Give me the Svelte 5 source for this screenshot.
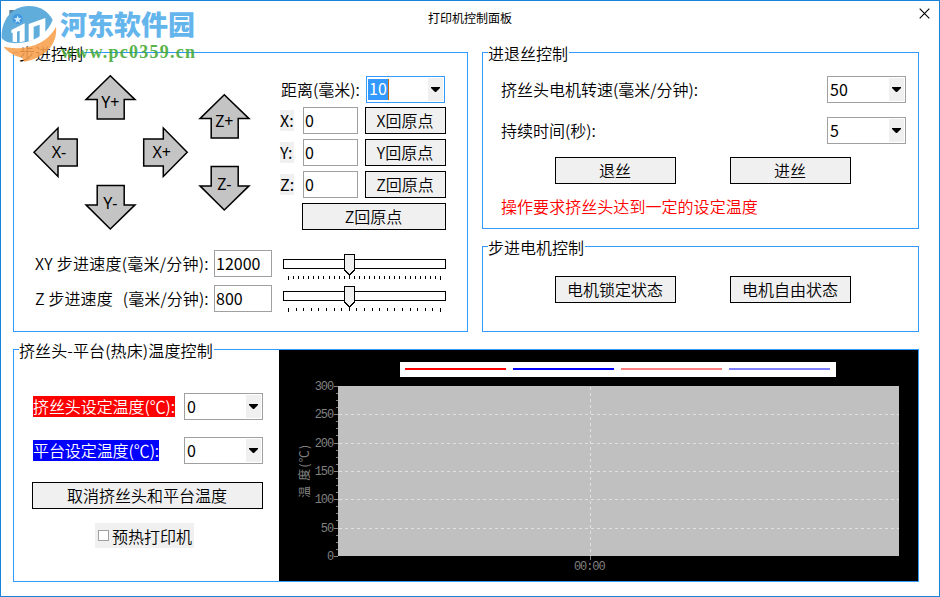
<script lang="ts">
  // Printer control panel: jogging, filament feed, motor state and temperatures.

  const UP = 'M90.3 10.7 115 34.6H104.2V54H77.2V34.6H66Z';
  const DOWN = 'M90.3 164 115 139.9H104.2V120.5H77.2V139.9H66Z';

  const arrows = [
    { label: 'Y+', d: UP, dx: 0, dy: 0, x: 90.3, y: 42.8 },
    { label: 'Z+', d: UP, dx: 114, dy: 19, x: 204.3, y: 61.9 },
    { label: 'X-', d: 'M14 87.3 38 63V74H57.2V101H38V111.5Z', dx: 0, dy: 0, x: 39, y: 92.8 },
    { label: 'X+', d: 'M167.2 87.3 143.3 63V74H123.7V101H143.3V111.5Z', dx: 0, dy: 0, x: 141.7, y: 92.8 },
    { label: 'Y-', d: DOWN, dx: 0, dy: 0, x: 90.3, y: 143.8 },
    { label: 'Z-', d: DOWN, dx: 114, dy: -19, x: 204.3, y: 124.9 },
  ];

  const axes = ['X', 'Y', 'Z'];
  let position = $state<Record<string, string>>({ X: '0', Y: '0', Z: '0' });
  let speedXY = $state('12000');
  let speedZ = $state('800');
  let preheat = $state(false);

  const sliders = [
    { y: 5, steps: 30 },
    { y: 37, steps: 20 },
  ];

  const series = ['#ff0000', '#0000ff', '#ff8080', '#8080ff'];
  const scale = [
    { value: 300, y: 36 },
    { value: 250, y: 64 },
    { value: 200, y: 93 },
    { value: 150, y: 121 },
    { value: 100, y: 149 },
    { value: 50, y: 178 },
    { value: 0, y: 206 },
  ];
</script>

{#snippet combo(value: string, active = false)}
  <div class="combo" class:active role="combobox" aria-expanded="false" aria-controls="list" tabindex="0">
    <span class="value">{value}</span>
    <span class="drop"><svg width="9" height="5" viewBox="0 0 9 5"><path d="M0 0H9V1L5 5H4L0 1Z" /></svg></span>
  </div>
{/snippet}

<div class="window">
  <header>
    <h1>打印机控制面板</h1>
    <button class="close" aria-label="close">
      <svg width="11" height="11" viewBox="0 0 11 11"><path d="M.7.7 10.3 10.3M10.3.7.7 10.3" /></svg>
    </button>
  </header>

  <main>
    <section class="group motion">
      <h2>步进控制</h2>
      <div class="top">
        <svg class="jog" width="240" height="175" viewBox="0 0 240 175">
          {#each arrows as a}
            <path d={a.d} transform="translate({a.dx} {a.dy})" />
            <text x={a.x} y={a.y}>{a.label}</text>
          {/each}
        </svg>
        <div class="axes">
          <div class="row first">
            <span class="text">距离(毫米):</span>
            {@render combo('10', true)}
          </div>
          {#each axes as axis}
            <div class="row">
              <span class="tag">{axis}:</span>
              <input class="pos" bind:value={position[axis]} />
              <button class="btn home">{axis}回原点</button>
            </div>
          {/each}
          <button class="btn home-z">Z回原点</button>
        </div>
      </div>
      <div class="speeds">
        <div class="fields">
          <label><span class="xy">XY 步进速度(毫米/分钟):</span><input bind:value={speedXY} /></label>
          <label><span class="z">Z 步进速度<i></i>(毫米/分钟):</span><input bind:value={speedZ} /></label>
        </div>
        <svg class="sliders" width="163" height="60" viewBox="0 0 163 60" shape-rendering="crispEdges">
          {#each sliders as s}
            <rect class="track" x=".5" y={s.y + 0.5} width="162" height="9" />
            <path class="thumb" d="M61.5 {s.y - 4.5}H71.5V{s.y + 11}L66.5 {s.y + 16}L61.5 {s.y + 11}Z" />
            {#each Array(s.steps + 1) as _, i}
              <rect
                x={Math.round(5 + (i * 152) / s.steps)}
                y={s.y + 17}
                width="1"
                height={i === 0 || i === s.steps ? 4 : 3}
              />
            {/each}
          {/each}
        </svg>
      </div>
    </section>

    <section class="group feed">
      <h2>进退丝控制</h2>
      <div class="row r1"><span class="text">挤丝头电机转速(毫米/分钟):</span>{@render combo('50')}</div>
      <div class="row r2"><span class="text">持续时间(秒):</span>{@render combo('5')}</div>
      <div class="pair">
        <button class="btn">退丝</button>
        <button class="btn">进丝</button>
      </div>
      <p class="warn">操作要求挤丝头达到一定的设定温度</p>
    </section>

    <section class="group motors">
      <h2>步进电机控制</h2>
      <div class="pair">
        <button class="btn">电机锁定状态</button>
        <button class="btn">电机自由状态</button>
      </div>
    </section>

    <section class="group temps">
      <div class="left">
        <h2 class="wide">挤丝头-平台(热床)温度控制</h2>
        <div class="row t1"><span class="hot">挤丝头设定温度(℃):</span>{@render combo('0')}</div>
        <div class="row t2"><span class="bed">平台设定温度(℃):</span>{@render combo('0')}</div>
        <button class="btn cancel">取消挤丝头和平台温度</button>
        <label class="preheat"><input type="checkbox" bind:checked={preheat} />预热打印机</label>
      </div>
      <svg class="chart" width="639" height="231" viewBox="0 0 639 231" shape-rendering="crispEdges">
        <rect width="639" height="231" fill="#000" />
        <rect x="121" y="12" width="436" height="15" fill="#fff" />
        {#each series as color, i}
          <rect x={126 + i * 108} y="18" width="101" height="2" fill={color} />
        {/each}
        <rect x="59" y="36" width="561" height="170" fill="#c0c0c0" />
        {#each scale as tick, i}
          <text x="54" y={tick.y + 4} text-anchor="end">{tick.value}</text>
          <rect class="tick" x="55" y={tick.y} width="4" height="1" />
          {#if i < scale.length - 1}
            {#each [7, 14, 21] as step}
              <rect class="tick" x="57" y={tick.y + step} width="2" height="1" />
            {/each}
          {/if}
          {#if i > 0 && i < scale.length - 1}
            <path class="grid" d="M60 {tick.y + 0.5}H620" />
          {/if}
        {/each}
        <path class="grid" d="M311.5 37V206" />
        <rect class="tick" x="311" y="206" width="1" height="4" />
        <text x="295" y="220">00:00</text>
        <text class="axis" transform="translate(29.5 148) rotate(-90)" textLength="53">温 度(℃)</text>
      </svg>
    </section>
  </main>

  <div class="badge">
    <svg width="60" height="66" viewBox="0 0 180 198">
      <path d="M28 30H56L70 38V72H28Z" fill="#42738f" />
      <path
        d="M5 114C2 66 32 18 86 18 122 18 146 36 158 60 146 94 112 120 74 127 46 132 16 130 5 114Z"
        fill="#4ba2d8"
      />
      <path d="M34 90 74 70V124L59 127V92L51 95V127L38 125V98L34 99ZM86 72 136 54V104L119 114V74L101 80V121L86 124Z" fill="#fff" />
      <path d="M168 80C174 134 134 174 72 185L66 172C46 170 22 156 11 140 50 150 132 148 168 80Z" fill="#f9a04d" />
      <circle cx="53" cy="57" r="15" fill="#2689dc" />
      <path d="m53 46 3 8 9 1-7 5 2 9-7-5-7 5 2-9-7-5 9-1Z" fill="#c9e8fa" />
    </svg>
    <div class="words">
      <b>河东软件园</b>
      <em>www.pc0359.cn</em>
    </div>
  </div>
</div>

<style>
  :global(body) {
    margin: 0;
    background: #fff;
  }

  .window {
    position: relative;
    box-sizing: border-box;
    width: 940px;
    height: 597px;
    border: 1px solid #1883d7;
    background: #fff;
    color: #000;
    font: 16px/20px 'Noto Sans CJK SC', sans-serif;
    font-weight: 350;
    white-space: nowrap;
    overflow: hidden;
  }

  .window * {
    box-sizing: border-box;
  }

  header {
    display: grid;
    grid-template-columns: 1fr auto 1fr;
    height: 51px;
  }

  h1 {
    grid-column: 2;
    margin: 7px 0 0;
    font-size: 12px;
    font-weight: 400;
  }

  .close {
    justify-self: end;
    align-self: start;
    height: 11px;
    margin: 7px 9px 0 0;
    padding: 0;
    border: 0;
    background: none;
    display: flex;
  }

  .close path {
    stroke: #000;
    stroke-width: 1.1;
  }

  main {
    display: grid;
    grid-template-columns: 455px 437px;
    grid-template-rows: 177px 86px 233px;
    gap: 17px 14px;
    margin-left: 12px;
  }

  .group {
    border: 1px solid #3399ff;
  }

  h2 {
    width: fit-content;
    height: 21px;
    margin: -10px 0 0 5px;
    padding: 0 1px 0 0;
    background: #fff;
    font-size: 16px;
    font-weight: inherit;
  }

  .wide {
    letter-spacing: 0.12px;
  }

  .row {
    display: flex;
    align-items: center;
    justify-content: space-between;
    height: 27px;
  }

  .text {
    padding-bottom: 2px;
  }

  .btn {
    height: 27px;
    padding: 0 1px 2px 0;
    border: 1px solid #000;
    background: #f0f0f0;
    color: #000;
    font: inherit;
  }

  input {
    height: 27px;
    padding: 0 0 2px 1px;
    border: 1px solid #a0a0a0;
    background: #fff;
    font: inherit;
    font-weight: 400;
    color: #000;
  }

  .combo {
    display: flex;
    align-items: center;
    justify-content: space-between;
    width: 79px;
    height: 27px;
    padding: 1px;
    border: 1px solid #a0a0a0;
    font-weight: 400;
  }

  .value {
    padding: 0 1px 2px;
  }

  .active {
    border-color: #3399ff;
  }

  .active .value {
    background: #3399ff;
    border-right: 1px solid #c60;
    color: #fff;
    height: 21px;
    line-height: 19px;
  }

  .drop {
    display: flex;
    align-items: center;
    justify-content: center;
    width: 15px;
    height: 23px;
    background: #f0f0f0;
  }

  .motion {
    grid-row: span 2;
  }

  .top {
    display: flex;
    padding: 0 0 0 6px;
    gap: 20px;
  }

  .motion .top {
    margin-top: 1px;
  }

  .jog path {
    fill: #c4c4c4;
    stroke: #000;
    stroke-width: 1.5;
  }

  .jog text {
    font: 16px 'Noto Sans', sans-serif;
    text-anchor: middle;
  }

  .axes {
    display: flex;
    flex-direction: column;
    gap: 5px;
    width: 166px;
    padding-top: 11px;
  }

  .first {
    margin-bottom: -1px;
    padding: 0 1px;
  }

  .tag {
    width: 14px;
    height: 21px;
    background: #f0f0f0;
    font-weight: 400;
  }

  .pos {
    width: 55px;
    margin-left: 2px;
  }

  .home {
    width: 81px;
  }

  .home-z {
    align-self: flex-end;
    width: 144px;
  }

  .speeds {
    display: flex;
    gap: 11px;
    padding: 10px 0 0 21px;
  }

  .fields {
    display: flex;
    flex-direction: column;
    gap: 8px;
  }

  .fields label {
    display: flex;
    align-items: center;
  }

  .fields span {
    width: 179px;
    padding-bottom: 2px;
  }

  .xy {
    letter-spacing: 0.25px;
  }

  .z {
    letter-spacing: 0.1px;
  }

  .fields i {
    display: inline-block;
    width: 10px;
  }

  .fields input {
    width: 58px;
  }

  .sliders {
    margin-top: 4px;
  }

  .track {
    fill: #fff;
    stroke: #000;
  }

  .thumb {
    fill: #f0f0f0;
    stroke: #000;
  }

  .feed .row {
    padding: 0 12px 0 18px;
  }

  .r1 {
    margin-top: 12px;
  }

  .r2 {
    margin-top: 14px;
  }

  .pair {
    display: flex;
    gap: 54px;
    margin: 13px 0 0 72px;
  }

  .pair .btn {
    width: 121px;
  }

  .warn {
    margin: 12px 0 0 18px;
    letter-spacing: 0.05px;
    color: #f00;
  }

  .motors .pair {
    margin-top: 18px;
  }

  .temps {
    grid-column: span 2;
    display: flex;
  }

  .left {
    width: 265px;
  }

  .left .row {
    padding: 0 16px 0 19px;
  }

  .t1 {
    margin-top: 32px;
  }

  .t2 {
    margin-top: 17px;
  }

  .hot,
  .bed {
    height: 21px;
    background: #f00;
    color: #fff;
    letter-spacing: -0.08px;
  }

  .bed {
    background: #00f;
  }

  .cancel {
    display: block;
    width: 231px;
    margin: 18px 0 0 18px;
  }

  .preheat {
    display: flex;
    align-items: center;
    gap: 3px;
    width: 99px;
    height: 25px;
    margin: 14px 0 0 81px;
    padding-left: 3px;
    background: #f0f0f0;
  }

  .preheat input {
    appearance: none;
    width: 11px;
    height: 11px;
    margin: 0;
    padding: 0;
  }

  .chart text {
    fill: #808080;
    font: 12px 'Liberation Mono', 'Noto Sans CJK SC', monospace;
    letter-spacing: -1.1px;
  }

  .chart .axis {
    font: 12px 'Noto Sans CJK SC', sans-serif;
    letter-spacing: 0;
  }

  .tick {
    fill: #808080;
  }

  .grid {
    stroke: #e0e0e0;
    stroke-dasharray: 3 3;
  }

  .badge {
    position: absolute;
    left: -1px;
    top: -1px;
    display: flex;
    opacity: 0.88;
    pointer-events: none;
  }

  .words {
    display: flex;
    flex-direction: column;
    padding-top: 8px;
  }

  .words b {
    font-size: 27px;
    font-weight: 900;
    line-height: 32px;
    color: #4fabea;
  }

  .words em {
    padding-left: 1px;
    font: bold 18px/24px 'Liberation Serif', serif;
    letter-spacing: 1.25px;
    color: #43a833;
  }
</style>
